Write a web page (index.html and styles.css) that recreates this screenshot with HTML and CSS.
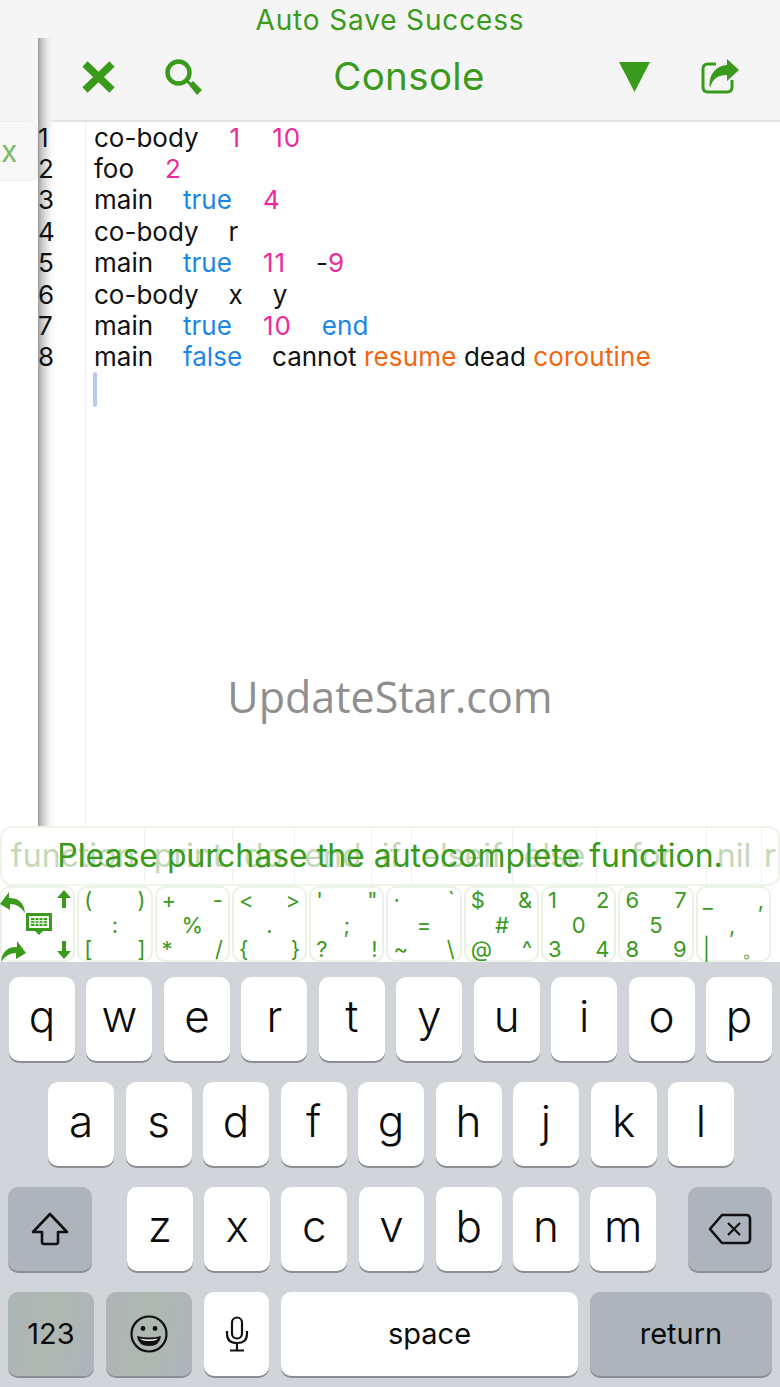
FILE: index.html
```html
<!DOCTYPE html>
<html lang="en">
<head>
<meta charset="utf-8">
<title>Console</title>
<link rel="stylesheet" href="styles.css">
</head>
<body>
<div class="screen">
  <div class="status">Auto Save Success</div>
  <div class="main">
    <aside class="drawer">
      <div class="drawer-top"></div>
      <div class="drawer-tab">x</div>
    </aside>
    <section class="panel">
      <header class="toolbar">
        <div class="tool-group">
          <svg class="ic-close" viewBox="0 0 35 34"><path d="M4 4 31 30M31 4 4 30" fill="none" stroke="#3a9a1c" stroke-width="7.5"/></svg>
          <svg class="ic-search" viewBox="0 0 38 38"><circle cx="14.5" cy="14.5" r="11" fill="none" stroke="#3a9a1c" stroke-width="4.5"/><path d="M23 23 35 34" fill="none" stroke="#3a9a1c" stroke-width="3"/><path d="M25 27 29 23 38 32 33 37Z" fill="#3a9a1c"/></svg>
        </div>
        <h1 class="title">Console</h1>
        <div class="tool-group right">
          <svg class="ic-down" viewBox="0 0 31 31"><path d="M0 1H31L15.500 31Z" fill="#3a9a1c"/></svg>
          <svg class="ic-share" viewBox="0 0 38 35"><path d="M15 5H7Q2 5 2 10V28Q2 33 7 33H26Q31 33 31 28V21" fill="none" stroke="#3a9a1c" stroke-width="3"/><path d="M26 0 38 11 26 22V16C17 16 12 19 9 29 7 17 14 7 26 6Z" fill="#3a9a1c"/></svg>
        </div>
      </header>
      <div class="editor">
        <div class="gutter">
          <div>1</div><div>2</div><div>3</div><div>4</div><div>5</div><div>6</div><div>7</div><div>8</div>
        </div>
        <div class="code">
          <div>co-body<span class="num tab">1</span><span class="num tab">10</span></div>
          <div>foo<span class="num tab">2</span></div>
          <div>main<span class="kw tab">true</span><span class="num tab">4</span></div>
          <div>co-body<span class="tab">r</span></div>
          <div>main<span class="kw tab">true</span><span class="num tab">11</span><span class="tab">-</span><span class="num">9</span></div>
          <div>co-body<span class="tab">x</span><span class="tab">y</span></div>
          <div>main<span class="kw tab">true</span><span class="num tab">10</span><span class="kw tab">end</span></div>
          <div>main<span class="kw tab">false</span><span class="tab">cannot</span> <span class="str">resume</span> dead <span class="str">coroutine</span></div>
          <div class="caret"></div>
        </div>
        <div class="watermark">UpdateStar.com</div>
      </div>
    </section>
  </div>

  <div class="suggest">
    <span class="sug s1">function</span><span class="sug s2">print</span><span class="sug s3">do</span><span class="sug s4">end</span><span class="sug s5">if</span><span class="sug s6">elseif</span><span class="sug s7">else</span><span class="sug s8">for</span><span class="sug s9">nil</span><span class="sug s10">r</span>
    <div class="purchase">Please purchase the autocomplete function.</div>
  </div>

  <div class="symbols">
    <div class="cap nav">
      <svg class="nav-undo" viewBox="0 0 26 24"><path d="M0 15 9 3V9C18 9 24 13 25 24 21 18 16 15 10 15V21Z" fill="#3a9a1c"/></svg>
      <svg class="nav-up" viewBox="0 0 14 18"><path d="M7 0 14 8H9V18H5V8H0Z" fill="#3a9a1c"/></svg>
      <svg class="nav-kb" viewBox="0 0 26 22"><path d="M0 0H26V18H17L13 22 9 18H0Z" fill="#3a9a1c"/><path d="M3 3H23V15H3Z" fill="#fff"/><path d="M5 5H21V13H5Z" fill="#3a9a1c"/><path d="M9 5V13M13 5V13M17 5V13M5 7.700H21M5 10.300H21" stroke="#fff" stroke-width="1"/></svg>
      <svg class="nav-redo" viewBox="0 0 26 24"><path d="M26 15 17 3V9C8 9 2 13 1 24 5 18 10 15 16 15V21Z" fill="#3a9a1c"/></svg>
      <svg class="nav-down" viewBox="0 0 14 18"><path d="M7 18 14 10H9V0H5V10H0Z" fill="#3a9a1c"/></svg>
    </div>
    <div class="cap"><span class="tl">(</span><span class="tr">)</span><span class="mid">:</span><span class="bl">[</span><span class="br">]</span></div>
    <div class="cap"><span class="tl">+</span><span class="tr">-</span><span class="mid">%</span><span class="bl">*</span><span class="br">/</span></div>
    <div class="cap"><span class="tl">&lt;</span><span class="tr">&gt;</span><span class="mid">.</span><span class="bl">{</span><span class="br">}</span></div>
    <div class="cap"><span class="tl">'</span><span class="tr">"</span><span class="mid">;</span><span class="bl">?</span><span class="br">!</span></div>
    <div class="cap"><span class="tl">·</span><span class="tr">`</span><span class="mid">=</span><span class="bl">~</span><span class="br">\</span></div>
    <div class="cap"><span class="tl">$</span><span class="tr">&amp;</span><span class="mid">#</span><span class="bl">@</span><span class="br">^</span></div>
    <div class="cap"><span class="tl">1</span><span class="tr">2</span><span class="mid">0</span><span class="bl">3</span><span class="br">4</span></div>
    <div class="cap"><span class="tl">6</span><span class="tr">7</span><span class="mid">5</span><span class="bl">8</span><span class="br">9</span></div>
    <div class="cap"><span class="tl">_</span><span class="tr">,</span><span class="mid">,</span><span class="bl">|</span><span class="br">。</span></div>
  </div>

  <div class="keyboard">
    <div class="row">
      <div class="key">q</div><div class="key">w</div><div class="key">e</div><div class="key">r</div><div class="key">t</div><div class="key">y</div><div class="key">u</div><div class="key">i</div><div class="key">o</div><div class="key">p</div>
    </div>
    <div class="row inset">
      <div class="key">a</div><div class="key">s</div><div class="key">d</div><div class="key">f</div><div class="key">g</div><div class="key">h</div><div class="key">j</div><div class="key">k</div><div class="key">l</div>
    </div>
    <div class="row split">
      <div class="key fn wide">
        <svg class="ic-shift" viewBox="0 0 38 34"><path d="M19 2 36 20H27V30Q27 32 25 32H13Q11 32 11 30V20H2Z" fill="none" stroke="#111" stroke-width="2.600" stroke-linejoin="round"/></svg>
      </div>
      <div class="letters">
        <div class="key">z</div><div class="key">x</div><div class="key">c</div><div class="key">v</div><div class="key">b</div><div class="key">n</div><div class="key">m</div>
      </div>
      <div class="key fn wide">
        <svg class="ic-back" viewBox="0 0 44 32"><path d="M14 2H38Q42 2 42 6V26Q42 30 38 30H14L2 16Z" fill="none" stroke="#111" stroke-width="2.600" stroke-linejoin="round"/><path d="M20 10 32 22M32 10 20 22" fill="none" stroke="#111" stroke-width="2.200"/></svg>
      </div>
    </div>
    <div class="row bottom">
      <div class="key fn tint num-key label">123</div>
      <div class="key fn tint emoji">
        <svg class="ic-emoji" viewBox="0 0 38 38"><circle cx="19" cy="19" r="17.500" fill="none" stroke="#111" stroke-width="2.200"/><circle cx="13" cy="13.500" r="2.400" fill="#111"/><circle cx="25" cy="13.500" r="2.400" fill="#111"/><path d="M7 21Q19 24 31 21 30 31 19 31 8 31 7 21Z" fill="#111"/><path d="M10 23.500Q19 25.500 28 23.500 26 26 19 26 12 26 10 23.500Z" fill="#fff"/></svg>
      </div>
      <div class="key mic">
        <svg class="ic-mic" viewBox="0 0 24 36"><rect x="7" y="1.500" width="10" height="21" rx="5" fill="none" stroke="#111" stroke-width="2.200"/><path d="M2 15V18Q2 27 12 27 22 27 22 18V15M12 27V34M5 34.500H19" fill="none" stroke="#111" stroke-width="2.200"/></svg>
      </div>
      <div class="key space label">space</div>
      <div class="key fn return label">return</div>
    </div>
  </div>
</div>
</body>
</html>
```
FILE: styles.css
```css
* { box-sizing: border-box; }
html, body { margin: 0; padding: 0; background: #fff; }
body { font-family: Inter, "Liberation Sans", sans-serif; }
.screen { width: 780px; height: 1387px; display: flex; flex-direction: column; overflow: hidden; position: relative; background: #fff; }

.status { height: 38px; background: #f5f5f5; color: #3a9a1c; font-size: 28px; line-height: 40px; text-align: center; letter-spacing: .85px; }

.main { height: 788px; display: flex; }
.drawer { width: 38px; flex: none; background: #fff; }
.drawer-top { height: 83px; background: #f5f5f5; }
.drawer-tab { height: 60px; background: #f8f8f8; border: 1px solid #eee; border-left: 0; border-radius: 0 8px 8px 0; color: #7dbb68; font-size: 30px; line-height: 58px; padding-left: 1px; }

.panel { flex: 1; position: relative; display: flex; flex-direction: column; min-width: 0; }
.panel::before { content: ""; position: absolute; left: 0; top: 0; bottom: 0; width: 18px; background: linear-gradient(90deg, #9b9b9b 0, #c8c8c8 22%, #e6e6e6 50%, rgba(245,245,245,.6) 75%, rgba(255,255,255,0) 100%); z-index: 2; pointer-events: none; }

.toolbar { height: 84px; flex: none; background: #f5f5f5; border-bottom: 2px solid #e2e2e2; display: flex; align-items: center; justify-content: space-between; padding: 0 41px 5px 43px; }
.tool-group { width: 121px; display: flex; align-items: center; justify-content: space-between; }
.title { margin: 0 0 1px -2px; font-size: 38.5px; font-weight: 400; color: #3a9a1c; line-height: 46px; letter-spacing: .35px; }
.ic-close { width: 35px; height: 34px; }
.ic-search { width: 38px; height: 38px; margin-left: -1px; }
.ic-down { width: 31px; height: 31px; margin-left: 1px; }
.ic-share { width: 38px; height: 35px; }

.editor { flex: 1; position: relative; display: flex; font-size: 26px; line-height: 31.4px; color: #111; margin-top: -.5px; }
.gutter { width: 48px; flex: none; border-right: 1px solid #eeeeee; position: relative; z-index: 3; }
.code { flex: 1; padding-left: 8px; white-space: nowrap; }
.tab { margin-left: 30px; }
.tab.num { margin-left: 31px; }
.num { color: #ee2a9a; letter-spacing: 1px; }
.kw { color: #1b86ea; }
.str { color: #f2660f; letter-spacing: .2px; }
.caret { width: 4px; height: 35px; background: #b9c8f2; border-radius: 2px; margin: -1px 0 0 -1px; }
.watermark { position: absolute; left: 0; right: 0; top: 545px; margin-left: -38px; text-align: center; font-family: "Open Sans", sans-serif; font-size: 43px; line-height: 60px; color: #8f8f8f; }

.suggest { height: 60px; flex: none; background: #fff; border: 2px solid #eef4ea; border-radius: 12px; position: relative; display: flex; overflow: hidden; }
.sug { flex: none; font-size: 32px; line-height: 56px; color: #c3d8b8; text-align: center; border-right: 1px solid #f1f4ef; white-space: nowrap; }
.s1 { width: 143px; } .s2 { width: 88px; } .s3 { width: 62px; } .s4 { width: 77px; } .s5 { width: 40px; } .s6 { width: 101px; } .s7 { width: 84px; } .s8 { width: 110px; } .s9 { width: 55px; } .s10 { flex: 1; border-right: 0; }
.purchase { position: absolute; left: 0; right: 0; top: 8px; text-align: center; font-size: 32px; line-height: 40px; color: #3a9a1c; white-space: nowrap; }

.symbols { height: 76px; flex: none; display: flex; gap: 2px; background: #fff; }
.cap { flex: 0 0 75.3px; min-width: 0; position: relative; border: 2px solid #eaf2e6; border-radius: 10px; color: #3a9a1c; font-size: 22px; line-height: 25px; display: grid; grid-template-columns: 1fr 1fr 1fr; grid-template-rows: 25px 24px 24px; grid-template-areas: "tl . tr" ". mid ." "bl . br"; padding: 0 5px; }
.tl { grid-area: tl; justify-self: start; }
.tr { grid-area: tr; justify-self: end; }
.mid { grid-area: mid; justify-self: center; }
.bl { grid-area: bl; justify-self: start; }
.br { grid-area: br; justify-self: end; }
.nav { padding: 0; display: block; }
.nav-undo { position: absolute; left: -2px; top: 1px; width: 26px; height: 24px; }
.nav-up { position: absolute; right: 2px; top: 2px; width: 14px; height: 18px; }
.nav-kb { position: absolute; left: 24px; top: 25px; width: 26px; height: 22px; }
.nav-redo { position: absolute; left: -2px; bottom: -2px; width: 26px; height: 24px; }
.nav-down { position: absolute; right: 2px; bottom: 1px; width: 14px; height: 18px; }

.keyboard { flex: 1; background: #d1d5da; padding-top: 14.5px; display: flex; flex-direction: column; gap: 21.33px; }
.row { display: flex; gap: 11.5px; height: 84px; padding: 0 8px 0 9px; }
.row.inset { padding: 0 46px 0 48px; }
.row.split { justify-content: space-between; padding: 0 8px; }
.row.bottom { padding: 0 8px; gap: 12px; }
.letters { display: flex; gap: 11.5px; width: 529px; margin-left: 3px; }
.key { flex: 1; min-width: 0; background: #fff; border-radius: 10px; box-shadow: 0 2px 0 #8b8e93; height: 84px; display: flex; align-items: center; justify-content: center; font-size: 44px; color: #0b0b0b; padding-bottom: 6px; font-weight: 300; }
.key.fn { background: #aeb4bc; }
.key.tint { background: linear-gradient(100deg, #adb5b7 0, #aeb8b0 50%, #aeb4bc 100%); }
.key.wide { flex: none; width: 84px; }
.label { font-size: 29px; font-weight: 400; padding-bottom: 2px; }
.num-key { flex: none; width: 86px; }
.emoji { flex: none; width: 86px; }
.mic { flex: none; width: 65px; }
.space { flex: none; width: 297px; }
.return { flex: none; width: 182px; }
.ic-shift { width: 38px; height: 34px; margin-top: 6px; }
.ic-back { width: 44px; height: 32px; margin-top: 6px; }
.ic-emoji { width: 38px; height: 38px; margin-top: 6px; }
.ic-mic { width: 24px; height: 36px; margin-top: 6px; }
```
